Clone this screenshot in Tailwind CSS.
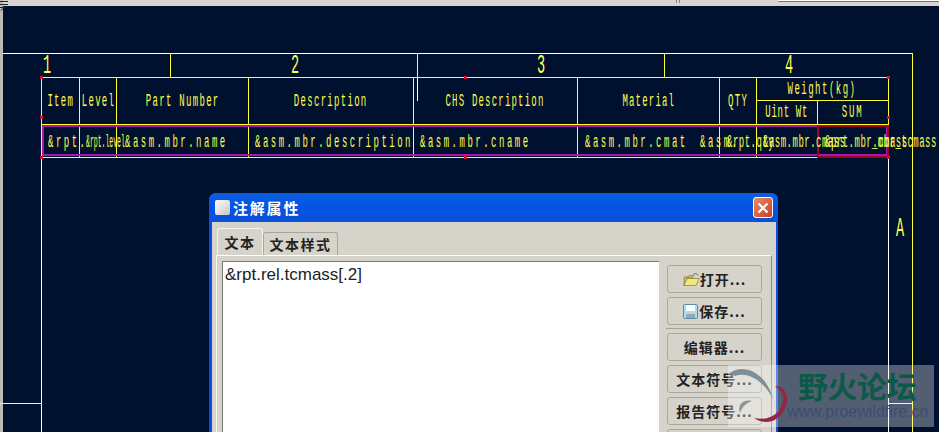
<!DOCTYPE html>
<html>
<head>
<meta charset="UTF-8">
<title>注解属性</title>
<script src="https://cdn.jsdelivr.net/npm/@tailwindcss/browser@4"></script>
</head>
<body class="bg-[#00102f] overflow-hidden">
<div class="relative w-[939px] h-[432px] overflow-hidden bg-[#00102f] font-['Liberation_Mono',monospace]">

  <!-- window chrome -->
  <div class="absolute left-0 top-0 w-full h-[6px] bg-[#d8d5d0]"></div>
  <div class="absolute left-0 top-0 w-[3px] h-full bg-[#bdbab5]"></div>
  <div class="absolute left-[778px] top-0 right-0 h-[2px] bg-white border-b border-[#777]"></div>
  <svg class="absolute left-0 top-0" width="9" height="11" viewBox="0 0 9 11" fill="none" stroke="#222"><path d="M0 1.500h8M0 4.500h8M0 7.500h6M1 10.500l3-3"/></svg>
  <svg class="absolute left-[675px] top-0" width="6" height="3" viewBox="0 0 6 3" fill="none" stroke="#888"><path d="M1.500 0v3M4.500 0v3"/></svg>

  <!-- drawing frame -->
  <div class="absolute left-[3px] top-[53px] w-[909px] h-px bg-white"></div>
  <div class="absolute left-[912px] top-[53px] w-px h-[379px] bg-[#ffff33]"></div>
  <div class="absolute left-[41px] top-[157px] w-px h-[275px] bg-white"></div>
  <div class="absolute left-[888px] top-[157px] w-px h-[275px] bg-white"></div>
  <div class="absolute left-0 top-[403px] w-[41px] h-px bg-[#ffff66]"></div>
  <div class="absolute left-[888px] top-[403px] w-[24px] h-px bg-[#ffff66]"></div>

  <!-- zone ruler -->
  <div class="absolute left-[170px] top-[53px] w-px h-[24px] bg-[#ffff33]"></div>
  <div class="absolute left-[417px] top-[53px] w-px h-[24px] bg-[#ffff33]"></div>
  <div class="absolute left-[417px] top-[77px] w-px h-[24px] bg-white"></div>
  <div class="absolute left-[664px] top-[53px] w-px h-[24px] bg-[#ffff33]"></div>
  <div class="text-[#ffff4d] text-[27px] leading-[28px]">
    <span class="absolute left-[37px] top-[52px] w-5 text-center scale-x-[0.5]">1</span>
    <span class="absolute left-[285px] top-[52px] w-5 text-center scale-x-[0.5]">2</span>
    <span class="absolute left-[531px] top-[52px] w-5 text-center scale-x-[0.5]">3</span>
    <span class="absolute left-[779px] top-[52px] w-5 text-center scale-x-[0.5]">4</span>
    <span class="absolute left-[890px] top-[215px] w-5 text-center scale-x-[0.5]">A</span>
  </div>

  <!-- bom table -->
  <div class="absolute left-[41px] top-[77px] w-[848px] h-[81px] grid grid-cols-[38px_37px_132px_165px_164px_142px_37px_61px_71px] grid-rows-[23px_24px_33px] border-t border-l border-[#ffff33] text-[#ffff4d] text-[18px] whitespace-nowrap">
    <div class="row-span-2 border-r border-b border-[#ffff33] flex items-center justify-center"><span class="scale-x-[0.5] tracking-[2.600px]">Item</span></div>
    <div class="row-span-2 border-r border-b border-[#ffff33] flex items-center justify-center"><span class="scale-x-[0.5] tracking-[2.600px]">Level</span></div>
    <div class="row-span-2 border-r border-b border-[#ffff33] flex items-center justify-center"><span class="scale-x-[0.5] tracking-[2.600px]">Part Number</span></div>
    <div class="row-span-2 border-r border-b border-[#ffff33] flex items-center justify-center"><span class="scale-x-[0.5] tracking-[2.600px]">Description</span></div>
    <div class="row-span-2 border-r border-b border-[#ffff33] flex items-center justify-center"><span class="scale-x-[0.5] tracking-[2.400px]">CHS Description</span></div>
    <div class="row-span-2 border-r border-b border-[#ffff33] flex items-center justify-center"><span class="scale-x-[0.5] tracking-[2.400px]">Material</span></div>
    <div class="row-span-2 border-r border-b border-[#ffff33] flex items-center justify-center"><span class="scale-x-[0.5] tracking-[2.600px]">QTY</span></div>
    <div class="col-span-2 border-r border-b border-[#ffff33] flex items-center justify-center"><span class="scale-x-[0.5] tracking-[3px]">Weight(kg)</span></div>
    <div class="border-r border-b border-[#ffff33] flex items-center justify-center"><span class="scale-x-[0.5] tracking-[1.400px]">Uint Wt</span></div>
    <div class="border-r border-b border-[#ffff33] flex items-center justify-center"><span class="scale-x-[0.5] tracking-[3.600px]">SUM</span></div>
    <div class="border-r border-b border-[#ffff33]"></div>
    <div class="border-r border-b border-[#ffff33]"></div>
    <div class="border-r border-b border-[#ffff33]"></div>
    <div class="border-r border-b border-[#ffff33]"></div>
    <div class="border-r border-b border-[#ffff33]"></div>
    <div class="border-r border-b border-[#ffff33]"></div>
    <div class="border-r border-b border-[#ffff33]"></div>
    <div class="border-r border-b border-[#ffff33]"></div>
    <div class="border-r border-b border-[#ffff33]"></div>
  </div>

  <!-- repeat region outlines -->
  <div class="absolute left-[42px] top-[125px] w-[846px] h-[31px] border-2 border-[#a818a8]"></div>
  <div class="absolute left-[817px] top-[125px] w-[72px] h-[33px] border-2 border-[#a00424]"></div>

  <!-- table grip points -->
  <div class="absolute left-[40px] top-[76px] size-[3px] bg-[#d01030]"></div>
  <div class="absolute left-[40px] top-[116px] size-[3px] bg-[#d01030]"></div>
  <div class="absolute left-[40px] top-[156px] size-[3px] bg-[#d01030]"></div>
  <div class="absolute left-[464px] top-[76px] size-[3px] bg-[#d01030]"></div>
  <div class="absolute left-[464px] top-[156px] size-[3px] bg-[#d01030]"></div>
  <div class="absolute left-[887px] top-[76px] size-[3px] bg-[#d01030]"></div>
  <div class="absolute left-[887px] top-[116px] size-[3px] bg-[#d01030]"></div>
  <div class="absolute left-[887px] top-[156px] size-[3px] bg-[#d01030]"></div>

  <!-- repeat region text, overlapping as in the source drawing -->
  <div class="text-[#ffff4d] text-[18px] leading-[18px] whitespace-nowrap">
    <span class="absolute left-[48px] top-[133px] origin-left scale-x-[0.5] tracking-[5px]">&amp;rpt.</span>
    <span class="absolute left-[86px] top-[133px] origin-left scale-x-[0.36]">&amp;rpt.level</span>
    <span class="absolute left-[125px] top-[133px] origin-left scale-x-[0.5] tracking-[5px]">&amp;asm.mbr.name</span>
    <span class="absolute left-[255px] top-[133px] origin-left scale-x-[0.5] tracking-[5px]">&amp;asm.mbr.description</span>
    <span class="absolute left-[420px] top-[133px] origin-left scale-x-[0.5] tracking-[5px]">&amp;asm.mbr.cname</span>
    <span class="absolute left-[585px] top-[133px] origin-left scale-x-[0.5] tracking-[5px]">&amp;asm.mbr.cmat</span>
    <span class="absolute left-[700px] top-[133px] origin-left scale-x-[0.5] tracking-[5px]">&amp;asm.</span>
    <span class="absolute left-[727px] top-[133px] origin-left scale-x-[0.5] tracking-[1px]">&amp;rpt.qty</span>
    <span class="absolute left-[763px] top-[133px] origin-left scale-x-[0.5] tracking-[1px]">&amp;asm.mbr.cmass</span>
    <span class="absolute left-[825px] top-[133px] origin-left scale-x-[0.5] tracking-[1px]">&amp;prt.mbr.cmass</span>
    <span class="absolute left-[872px] top-[133px] origin-left scale-x-[0.5] tracking-[1px]">_mbr_tcmass</span>
  </div>

  <!-- dialog -->
  <div class="absolute left-[209px] top-[193px] w-[569px] h-[260px] rounded-t-[7px] bg-[#0a4ee8] pl-[3px] pr-[2px] pb-[3px] flex flex-col font-['Noto_Sans_CJK_SC',sans-serif]">
    <div class="h-[29px] shrink-0 -ml-[3px] -mr-[2px] rounded-t-[7px] bg-gradient-to-b from-[#0a5fe0] via-[#0553e4] to-[#0a50d8] flex items-center pl-[6px] pr-[5px]">
      <div class="w-[15px] h-[15px] rounded-[2px] bg-gradient-to-br from-white to-[#c9c6c0]"></div>
      <span class="ml-[3px] mt-[1px] text-white text-[15px] font-bold tracking-[1.800px]">注解属性</span>
      <div class="ml-auto w-[20px] h-[21px] rounded-[3px] border border-white bg-gradient-to-br from-[#e8886a] to-[#c8401c] flex items-center justify-center">
        <svg width="12" height="12" viewBox="0 0 12 12"><path d="M1.500 1.500 10.500 10.500M10.500 1.500 1.500 10.500" stroke="#fff" stroke-width="2.200" fill="none"/></svg>
      </div>
    </div>
    <div class="flex-1 bg-[#d6d3cb] pt-[6px] pl-[4px] pr-[4px] flex flex-col">
      <div class="flex items-end h-[27px] shrink-0 pl-[1px] text-[14px] font-bold text-[#222] tracking-[1.500px]">
        <div class="h-[27px] w-[46px] flex items-center justify-center border border-b-0 border-[#f4f3ef] rounded-t-[3px] bg-[#d6d3cb]">文本</div>
        <div class="h-[23px] w-[75px] flex items-center justify-center border border-b-0 border-[#a8a59d] rounded-t-[3px]">文本样式</div>
      </div>
      <div class="flex-1 border-t border-l border-r border-t-white border-l-white border-r-[#8d8a82] flex pt-[5px] pl-[5px] pr-[9px] gap-[8px]">
        <div class="w-[437px] bg-white border-t border-l border-[#777] pl-[2px] pt-[3px] font-['Liberation_Sans',sans-serif] text-[17px] leading-[20px] text-[#222]">&amp;rpt.rel.tcmass[.2]</div>
        <div class="w-[95px] flex flex-col pt-[4px] text-[14px] font-bold text-[#222] tracking-[1px]">
          <div class="h-[28px] shrink-0 rounded-[3px] border border-[#aaa79f] flex items-center justify-center">
            <svg width="17" height="15" viewBox="0 0 17 15"><path d="M1 5h4l1-1.500h4v2H4l-3 8z" fill="#d8c860" stroke="#807840" stroke-width=".7"/><path d="M1 13.500 4 6.500h12l-3 7z" fill="#f4e878" stroke="#807840" stroke-width=".7"/><path d="M10 3.500c1.500-2.500 4-2.500 5 0" fill="none" stroke="#555" stroke-width=".9"/></svg>打开...
          </div>
          <div class="h-[28px] shrink-0 mt-[4px] rounded-[3px] border border-[#aaa79f] flex items-center justify-center">
            <svg width="15" height="15" viewBox="0 0 15 15" class="mr-px"><rect x=".5" y=".5" width="14" height="14" rx="1" fill="#a8dcf0" stroke="#5a8aa8"/><rect x="3" y="1" width="9" height="6" fill="#fff"/><rect x="3" y="10" width="9" height="4" fill="#98a8b4"/></svg>保存...
          </div>
          <div class="h-px shrink-0 mt-[3px] bg-[#a3a098] -mx-[1px]"></div>
          <div class="h-[28px] shrink-0 mt-[4px] rounded-[3px] border border-[#aaa79f] flex items-center justify-center">编辑器...</div>
          <div class="h-[28px] shrink-0 mt-[4px] rounded-[3px] border border-[#aaa79f] flex items-center justify-center">文本符号...</div>
          <div class="h-[28px] shrink-0 mt-[4px] rounded-[3px] border border-[#aaa79f] flex items-center justify-center">报告符号...</div>
          <div class="h-[28px] shrink-0 mt-[4px] rounded-[3px] border border-[#aaa79f]"></div>
        </div>
      </div>
    </div>
  </div>

  <!-- forum watermark -->
  <div class="absolute left-[728px] top-[365px] w-[206px] h-[62px] bg-white/33 font-['Noto_Sans_CJK_SC',sans-serif]">
    <svg class="absolute left-0 top-0" width="70" height="62" viewBox="0 0 70 62">
      <path d="M2 8C14-2 38 6 45 34C36 16 20 6 7 11Z" fill="#7f8f98"/>
      <path d="M47 21C58 21 63 33 56 46C50 56 38 61 26 53C40 56 50 50 54 40C57 32 54 26 47 21Z" fill="#8e2a48"/>
      <path d="M12 48C9 40 15 34 24 36C18 38 14 42 12 48Z" fill="#8f9498"/>
    </svg>
    <div class="absolute left-[70px] top-[2px] text-[30px] leading-[36px] font-bold text-[#0b5a48] tracking-[-0.500px] whitespace-nowrap">野火论坛</div>
    <div class="absolute left-[59px] top-[37px] text-[16px] leading-[20px] font-['Liberation_Sans',sans-serif] text-[#3a4e70] whitespace-nowrap">www.proewildfire.cn</div>
  </div>
</div>
</body>
</html>
